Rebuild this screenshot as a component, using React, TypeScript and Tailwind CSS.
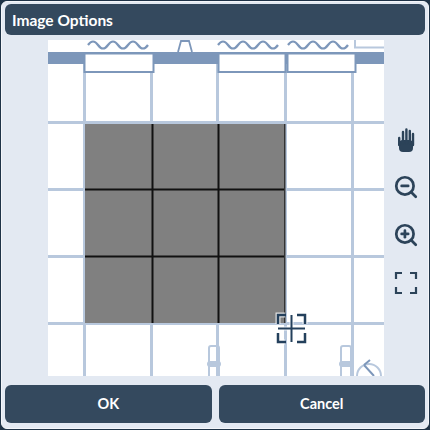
import { ZoomIn, ZoomOut } from "lucide-react";

const WAVE = "q5 -7 10 0 t10 0 t10 0 t10 0 t10 0 t10 0";

// the floor plan behind the selection, coordinates are relative to the picture
function FloorPlan() {
    const vLines = [35, 102, 168, 236, 303];
    const hLines = [81, 148, 215, 282];
    const line = "#b8c8dd";
    const dark = "#7d97ba";
    return (
        <svg width="336" height="336" viewBox="0 0 336 336" className="block bg-white">
            {vLines.map((x) => (
                <rect key={x} x={x} y="24" width="3" height="312" fill={line} />
            ))}
            {hLines.map((y) => (
                <rect key={y} x="0" y={y} width="336" height="3" fill={line} />
            ))}
            <rect x="0" y="12" width="336" height="12" fill={dark} />
            <rect x="36.5" y="13.5" width="69" height="18.5" fill="#fff" stroke={dark} strokeWidth="2" />
            <rect x="170.5" y="13.5" width="67" height="18.5" fill="#fff" stroke={dark} strokeWidth="2" />
            <rect x="239.5" y="13.5" width="68" height="18.5" fill="#fff" stroke={dark} strokeWidth="2" />
            <path d={`M40 5 ${WAVE}`} fill="none" stroke={dark} strokeWidth="2.2" />
            <path d={`M170 5 ${WAVE}`} fill="none" stroke={dark} strokeWidth="2.2" />
            <path d={`M240 5 ${WAVE}`} fill="none" stroke={dark} strokeWidth="2.2" />
            <path d="M130 12 L133 1 H141 L144 12" fill="none" stroke={dark} strokeWidth="1.8" />
            <path d="M307 0 V7.5 H336" fill="none" stroke={line} strokeWidth="2" />
            {[160, 292].map((x) => (
                <g key={x}>
                    <path d={`M${x + 1} 336 V308 Q${x + 1} 306 ${x + 3} 306 H${x + 9} Q${x + 11} 306 ${x + 11} 308 V336`} fill="none" stroke={line} strokeWidth="2" />
                    <rect x={x - 1} y="321" width="14" height="6" rx="3" fill={line} />
                </g>
            ))}
            <path d="M309 336 A12 12 0 0 1 333 336" fill="none" stroke={line} strokeWidth="2" />
            <path d="M316 325 L326 336 M316 325 L322 320" fill="none" stroke={dark} strokeWidth="2" />

            <rect x="37" y="84" width="200" height="199" fill="#808080" />
            <rect x="103.5" y="84" width="2" height="199" fill="#111" />
            <rect x="169.5" y="84" width="2" height="199" fill="#111" />
            <rect x="37" y="148.5" width="200" height="2" fill="#111" />
            <rect x="37" y="215.5" width="200" height="2" fill="#111" />
            <rect x="236" y="84" width="1.5" height="199" fill="#333" />

            <g fill="none" stroke="#fff" strokeOpacity="0.75" strokeWidth="5">
                <path d="M237 275 H230 V284 M250 275 H257 V284 M230 293 V302 H237 M257 293 V302 H250" />
                <path strokeWidth="4" d="M243.5 275 V302 M230 288.5 H257" />
            </g>
            <g fill="none" stroke="#24405c" strokeWidth="2.5">
                <path d="M238 275 H230 V284 M249 275 H257 V284 M230 293 V302 H238 M257 293 V302 H249" />
                <path strokeWidth="2" d="M243.5 275 V302 M230 288.5 H257" />
            </g>
        </svg>
    );
}

function HandIcon() {
    return (
        <svg width="18" height="24" viewBox="0 0 18 24" fill="currentColor" stroke="none">
            <rect x="2" y="12" width="14" height="12" rx="4" />
            <g stroke="currentColor" strokeWidth="2.4" strokeLinecap="round">
                <path d="M2.2 10 V17 M6 4 V15 M9.4 1.5 V15 M12.8 3 V15 M16 6 V17" />
            </g>
        </svg>
    );
}

export default function App() {
    return (
        <div className="w-[430px] h-[430px] bg-[#1f3347] p-[1px]">
            <div className="h-full flex flex-col bg-[#e3e9f2] border border-[#f4f6fa] rounded-md px-[3px] pt-[2px] pb-[5px] font-['Lato','Liberation_Sans',sans-serif]">
                <div className="h-[31px] shrink-0 flex items-center px-[7px] pt-[2px] rounded-md bg-[#34495e] text-white font-bold text-[15.5px]">
                    Image Options
                </div>

                <div className="flex-1 flex pt-[5px] pl-[43px]">
                    <FloorPlan />
                    <div className="flex-1 flex flex-col items-center text-[#2c4359] pt-[88px] pl-[3px]">
                        <HandIcon />
                        <ZoomOut size={26} strokeWidth={2.5} className="mt-[22px]" />
                        <ZoomIn size={26} strokeWidth={2.5} className="mt-[22px]" />
                        <svg width="24" height="24" viewBox="0 0 24 24" fill="none" stroke="currentColor" strokeWidth="2.2" className="mt-[23px]">
                            <path d="M8 2 H2 V8 M16 2 H22 V8 M2 16 V22 H8 M22 16 V22 H16" />
                        </svg>
                    </div>
                </div>

                <div className="h-[38px] shrink-0 mt-[7px] grid grid-cols-2 gap-[7px] text-white font-bold text-[14.5px]">
                    <div className="flex items-center justify-center rounded-md bg-[#34495e]">OK</div>
                    <div className="flex items-center justify-center rounded-md bg-[#34495e]">Cancel</div>
                </div>
            </div>
        </div>
    );
}
